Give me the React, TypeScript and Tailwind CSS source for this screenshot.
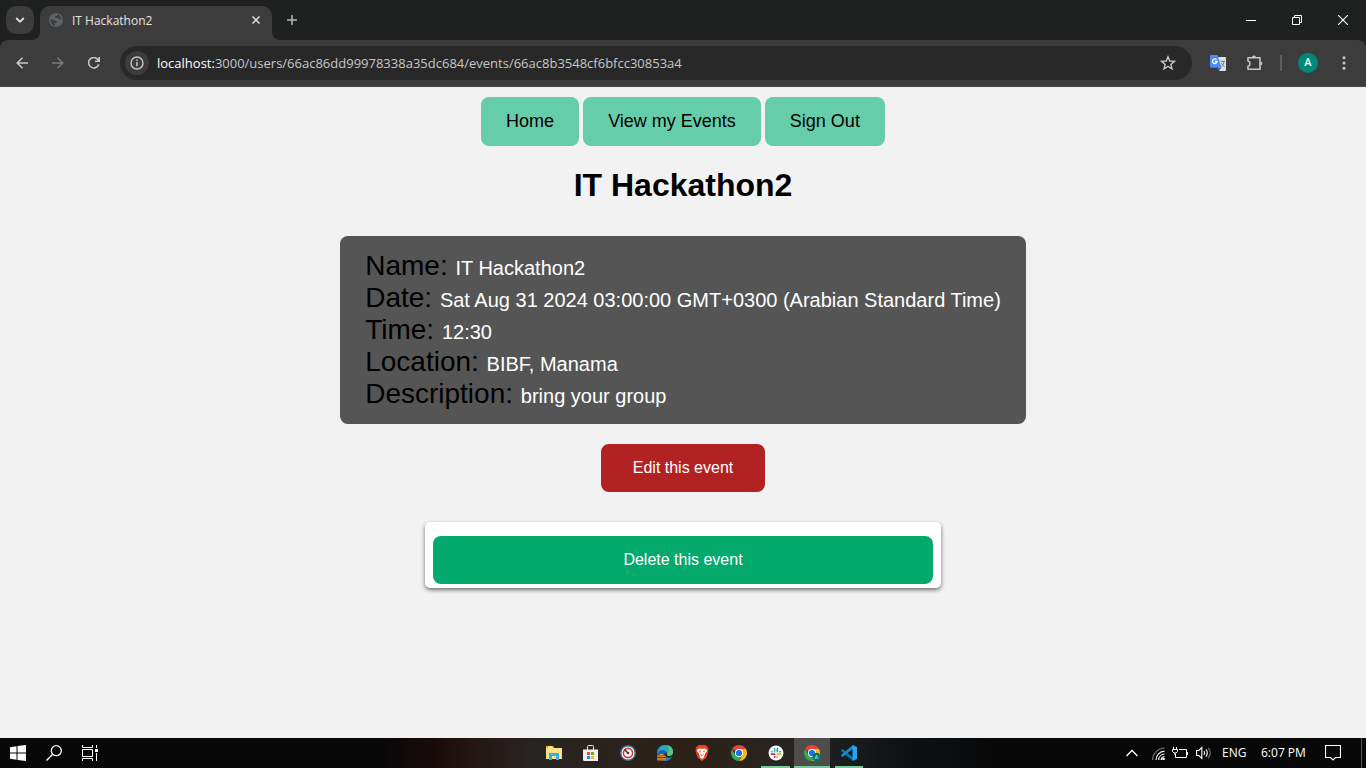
import React from "react";

function IconButton({ label, className, children }: { label: string; className: string; children: React.ReactNode }) {
  return (
    <button type="button" aria-label={label} className={`flex shrink-0 items-center justify-center ${className}`}>
      {children}
    </button>
  );
}

function GlobeIcon() {
  return (
    <svg width="14" height="14" viewBox="0 0 14 14" aria-hidden="true">
      <circle cx="7" cy="7" r="7" fill="#5f6368" />
      <path d="M1.400 6.400H4.600Q6.200 6.400 6.200 8H7.800V9.800H6.200V12.500C3.400 12.200 1.400 9.800 1.400 6.400Z" fill="#3c3c3c" />
      <path d="M8.300 1.500C8.300 3 7.600 3.400 6 3.400V5H8.600Q9.400 5 9.400 6.200H12.500C12.300 3.600 10.600 1.900 8.300 1.500Z" fill="#3c3c3c" />
    </svg>
  );
}

function ChromeIcon({ badge = false }: { badge?: boolean }) {
  return (
    <svg width="18" height="18" viewBox="0 0 18 18" aria-hidden="true">
      <g transform="translate(1 1)">
        <path d="M8 8L1.070 4A8 8 0 0 1 14.930 4Z" fill="#ea4335" />
        <path d="M8 4H14.930A8 8 0 0 1 8 16L11.500 10Z" fill="#fbbc05" />
        <path d="M4.540 10L1.070 4A8 8 0 0 0 8 16L11.400 10Z" fill="#34a853" />
        <circle cx="8" cy="8" r="4" fill="#fff" />
        <circle cx="8" cy="8" r="3.100" fill="#1a73e8" />
      </g>
      {badge && (
        <g>
          <circle cx="13.500" cy="13" r="4.200" fill="#00796b" />
          <path d="M12 15L13.500 11.200L15 15M12.600 13.800H14.400" stroke="#9fd8d0" strokeWidth=".8" fill="none" />
        </g>
      )}
    </svg>
  );
}

function BrowserChrome() {
  return (
    <header className="bg-[#1f2120] font-['Open_Sans','Noto_Sans',sans-serif]">
      <div className="flex h-10 items-stretch">
        <div className="flex w-10 items-center pl-1.5">
          <IconButton label="Search tabs" className="size-7 rounded-[10px] bg-[#3c3c3c] text-[#e3e3e3]">
            <svg width="10" height="10" viewBox="0 0 10 10" aria-hidden="true"><path d="M1.200 3L5 6.800L8.800 3" stroke="currentColor" strokeWidth="1.800" fill="none" /></svg>
          </IconButton>
        </div>
        <div className="relative mt-1.5 flex w-58 items-center rounded-t-[10px] bg-[#3c3c3c] px-2 pb-1.5">
          <svg className="absolute bottom-0 -left-2" width="8" height="8" viewBox="0 0 8 8" aria-hidden="true"><path d="M8 0A8 8 0 0 1 0 8H8Z" fill="#3c3c3c" /></svg>
          <svg className="absolute -right-2 bottom-0" width="8" height="8" viewBox="0 0 8 8" aria-hidden="true"><path d="M0 0A8 8 0 0 0 8 8H0Z" fill="#3c3c3c" /></svg>
          <span className="flex w-6 pl-px"><GlobeIcon /></span>
          <span className="flex-1 pt-px text-xs text-[#e3e3e3]">IT Hackathon2</span>
          <IconButton label="Close tab" className="size-4 text-[#e3e3e3]">
            <svg width="8" height="8" viewBox="0 0 8 8" aria-hidden="true"><path d="M.5 .5L7.500 7.500M7.500 .5L.5 7.500" stroke="currentColor" strokeWidth="1.500" /></svg>
          </IconButton>
        </div>
        <IconButton label="New tab" className="w-10 text-[#b8bab9]">
          <svg width="10" height="10" viewBox="0 0 10 10" aria-hidden="true"><path d="M0 5H10M5 0V10" stroke="currentColor" strokeWidth="1.500" /></svg>
        </IconButton>
        <div className="flex-1" />
        <IconButton label="Minimize" className="w-[46px] text-white">
          <svg width="10" height="10" viewBox="0 0 10 10" aria-hidden="true"><path d="M0 5.500H10" stroke="currentColor" /></svg>
        </IconButton>
        <IconButton label="Restore" className="w-[46px] text-white">
          <svg width="10" height="10" viewBox="0 0 10 10" aria-hidden="true"><path d="M.5 2.500H7.500V9.500H.5ZM2.500 2.500V.5H9.500V7.500H7.500" stroke="currentColor" fill="none" /></svg>
        </IconButton>
        <IconButton label="Close window" className="w-[46px] text-white">
          <svg width="10" height="10" viewBox="0 0 10 10" aria-hidden="true"><path d="M0 0L10 10M10 0L0 10" stroke="currentColor" strokeWidth="1.100" /></svg>
        </IconButton>
      </div>
      <div className="flex h-[47px] items-center rounded-t-lg border-b border-[#4a4748] bg-[#3c3c3c] pl-1">
        <IconButton label="Back" className="size-9 text-[#c7c7c7]">
          <svg width="12" height="12" viewBox="0 0 12 12" aria-hidden="true"><path d="M12 6H1.200M6.500 .7L1.200 6L6.500 11.300" stroke="currentColor" strokeWidth="1.600" fill="none" /></svg>
        </IconButton>
        <IconButton label="Forward" className="size-9 text-[#7c7c7c]">
          <svg width="12" height="12" viewBox="0 0 12 12" aria-hidden="true"><path d="M0 6H10.800M5.500 .7L10.800 6L5.500 11.300" stroke="currentColor" strokeWidth="1.600" fill="none" /></svg>
        </IconButton>
        <IconButton label="Reload" className="size-9 text-[#c7c7c7]">
          <svg width="12" height="12" viewBox="0 0 12 12" aria-hidden="true"><path d="M10.800 7.200A5.200 5.200 0 1 1 9.800 2.400L11 3.800M11.200 0V4.300H7" stroke="currentColor" strokeWidth="1.600" fill="none" /></svg>
        </IconButton>
        <div className="ml-2 flex h-[34px] flex-1 items-center rounded-full bg-[#282828] pl-[5px]">
          <IconButton label="View site information" className="size-6 rounded-full bg-[#3c3c3c] text-[#c7c7c7]">
            <svg width="14" height="14" viewBox="0 0 14 14" aria-hidden="true"><circle cx="7" cy="7" r="6" stroke="currentColor" strokeWidth="1.400" fill="none" /><path d="M7 6V10.200M7 3.600V5" stroke="currentColor" strokeWidth="1.500" /></svg>
          </IconButton>
          <div className="flex-1 pt-0.5 pl-2 text-[13px] whitespace-nowrap text-[#c7c7c7]">
            <span className="text-white">localhost:</span>3000/users/66ac86dd99978338a35dc684/events/66ac8b3548cf6bfcc30853a4
          </div>
          <IconButton label="Bookmark this tab" className="w-12 text-[#c7c7c7]">
            <svg width="16" height="16" viewBox="0 0 16 16" aria-hidden="true"><path d="M8 1.800L9.800 6L14.400 6.400L10.900 9.400L12 13.900L8 11.500L4 13.900L5.100 9.400L1.600 6.400L6.200 6Z" stroke="currentColor" strokeWidth="1.400" fill="none" /></svg>
          </IconButton>
        </div>
        <IconButton label="Google Translate" className="ml-2 size-9">
          <svg width="16" height="16" viewBox="0 0 16 16" aria-hidden="true">
            <path d="M7 2H15Q16 2 16 3V15Q16 16 15 16H9Z" fill="#e0dfdb" />
            <path d="M10.500 6.500H15M12.800 5.500V6.500M14.200 6.500Q13.500 10 11.400 11.500M11.400 8Q12.300 10.500 14.700 12" stroke="#75777c" strokeWidth=".9" fill="none" />
            <path d="M7.500 12.500H11.500L9 16Z" fill="#3367d6" />
            <path d="M1 0H7.500L11.500 12.700H1Q0 12.700 0 11.700V1Q0 0 1 0Z" fill="#4c8bf5" />
            <path d="M6.500 4.600A2.300 2.300 0 1 0 7.100 6.500H4.900" stroke="#fff" strokeWidth="1.300" fill="none" />
          </svg>
        </IconButton>
        <IconButton label="Extensions" className="size-9 pl-0.5 text-[#c7c7c7]">
          <svg width="18" height="18" viewBox="0 0 18 18" aria-hidden="true"><path d="M2 3.700H14V15.300H2V12.200Q4 11.700 4 9.500Q4 7.500 2 7Z" stroke="currentColor" strokeWidth="1.600" strokeLinejoin="round" fill="none" /><path d="M6 3.500A2 2 0 0 1 10 3.500ZM14.300 7.500A2 2 0 0 1 14.300 11.500Z" fill="currentColor" /></svg>
        </IconButton>
        <span className="ml-2 h-4 w-0.5 bg-[#5d5d5d]" />
        <IconButton label="Profile" className="ml-2 size-9">
          <span className="flex size-5 items-center justify-center rounded-full bg-[#00897b] font-[Roboto,sans-serif] text-[11px] font-medium text-white">A</span>
        </IconButton>
        <IconButton label="Menu" className="mr-1 size-9 text-[#c7c7c7]">
          <svg width="4" height="14" viewBox="0 0 4 14" aria-hidden="true" fill="currentColor"><circle cx="2" cy="1.700" r="1.500" /><circle cx="2" cy="7" r="1.500" /><circle cx="2" cy="12.300" r="1.500" /></svg>
        </IconButton>
      </div>
    </header>
  );
}

const details = [
  ["Name", "IT Hackathon2"],
  ["Date", "Sat Aug 31 2024 03:00:00 GMT+0300 (Arabian Standard Time)"],
  ["Time", "12:30"],
  ["Location", "BIBF, Manama"],
  ["Description", "bring your group"],
];

function EventPage() {
  return (
    <main className="flex flex-1 flex-col items-center bg-[#f2f2f2] pt-2.5 font-['Liberation_Sans',Arial,sans-serif] text-black">
      <nav className="flex gap-1 text-lg leading-[21px]">
        {["Home", "View my Events", "Sign Out"].map((item) => (
          <a key={item} href="#" className="rounded-lg bg-[#66cdaa] px-[25px] py-3.5">{item}</a>
        ))}
      </nav>
      <h1 className="mt-5 text-[32px] leading-[38px] font-bold">IT Hackathon2</h1>
      <dl className="mt-8 rounded-lg bg-[#555555] px-[25px] py-3.5">
        {details.map(([term, value]) => (
          <div key={term} className="h-8 whitespace-nowrap">
            <dt className="inline text-[28px] leading-8">{term}:&nbsp;</dt>
            <dd className="inline text-xl leading-8 text-white">{value}</dd>
          </div>
        ))}
      </dl>
      <a href="#" className="mt-5 rounded-lg bg-[#b22222] px-8 py-3 text-base text-white">Edit this event</a>
      <form className="mt-[30px] flex w-full max-w-[516px] flex-col rounded-[5px] bg-white px-2 pt-3.5 pb-1 shadow-[0_2px_4px_rgba(0,0,0,0.55)]" onSubmit={(event) => event.preventDefault()}>
        <button type="submit" className="rounded-lg bg-[#04aa6d] py-3 text-base text-white">Delete this event</button>
      </form>
    </main>
  );
}

function Taskbar() {
  return (
    <footer className="flex h-[30px] bg-[linear-gradient(90deg,#080808_0%,#080808_28%,#190c0b_32%,#241716_35%,#282522_39%,#2d2117_50%,#272522_58%,#0e1215_66%,#080808_73%,#080808_100%)] font-['Open_Sans','Noto_Sans',sans-serif] text-white">
      <div className="flex flex-1">
        <IconButton label="Start" className="w-9">
          <svg width="16" height="16" viewBox="0 0 16 16" aria-hidden="true" fill="#fff"><path d="M0 2.200L6.500 1.300V7.500H0ZM7.500 1.100L16 0V7.500H7.500ZM0 8.500H6.500V14.700L0 13.800ZM7.500 8.500H16V16L7.500 14.900Z" /></svg>
        </IconButton>
        <IconButton label="Search" className="w-9">
          <svg width="16" height="16" viewBox="0 0 16 16" aria-hidden="true"><circle cx="10.300" cy="5.700" r="5" stroke="#fff" strokeWidth="1.300" fill="none" /><path d="M6.700 9.300L.5 15.500" stroke="#fff" strokeWidth="1.400" /></svg>
        </IconButton>
        <IconButton label="Task view" className="w-9">
          <svg width="16" height="16" viewBox="0 0 16 16" aria-hidden="true" stroke="#fff" fill="none"><path d="M.5 0V2.500H10.500V0M.5 4.500H10.500V11.500H.5ZM.5 16V13.500H10.500V16M14.500 0V3M14.500 8V16" /><path d="M13 4H16V7H13Z" fill="#fff" stroke="none" /></svg>
        </IconButton>
      </div>
      <div className="flex pl-9">
        <IconButton label="File Explorer" className="w-[37px]">
          <svg width="16" height="16" viewBox="0 0 16 16" aria-hidden="true"><path d="M0 1H7L8 3H16V14H0Z" fill="#ffe08a" /><path d="M0 1H7L8 3H0Z" fill="#f5bd2e" /><path d="M1 2H2" stroke="#9b741b" /><path d="M2 2H6" stroke="#fff" /><path d="M3 15V8H13V15H10V11H6V15Z" fill="#38aee3" /></svg>
        </IconButton>
        <IconButton label="Microsoft Store" className="w-[37px]">
          <svg width="16" height="16" viewBox="0 0 16 16" aria-hidden="true"><path d="M4.500 5V1.500Q4.500 .5 5.500 .5H9.500Q10.500 .5 10.500 1.500V5" stroke="#f0f0f0" fill="none" /><path d="M0 4.500H15V16H1.500Q0 16 0 14.500Z" fill="#f0f0f0" /><path d="M4 7H7V10H4Z" fill="#e34a2e" /><path d="M8 7H11V10H8Z" fill="#72a52c" /><path d="M4 11H7V14H4Z" fill="#168edb" /><path d="M8 11H11V14H8Z" fill="#f2b412" /></svg>
        </IconButton>
        <IconButton label="Clock utility" className="w-[37px]">
          <svg width="16" height="16" viewBox="0 0 16 16" aria-hidden="true"><circle cx="8" cy="8" r="7.300" fill="#f5f5f5" stroke="#3d6488" strokeWidth="1.400" /><circle cx="8" cy="8" r="4.600" fill="#fff" stroke="#d9362f" strokeWidth="1.600" /><path d="M8 8L4.500 4.500" stroke="#303030" strokeWidth="1.500" /><circle cx="8" cy="8" r="1.300" fill="#383838" /></svg>
        </IconButton>
        <IconButton label="Microsoft Edge" className="w-[37px]">
          <svg width="16" height="16" viewBox="0 0 16 16" aria-hidden="true"><path d="M0 8A8 8 0 0 1 8 0Q16 0 16 7Q16 11 11.500 11Q9.500 11 10 9Q10 6 6 6Q2 6 1 10Z" fill="#2ba9c4" /><path d="M10 .3Q16 1.500 16 7Q16 11 11.500 11Q9.500 11 10 9Q14 6 10 .3Z" fill="#5cc774" /><path d="M0 10Q1 4.500 6 5Q9.500 5.500 10 8.500Q7 7.500 7.500 11L9 16H8Q0 16 0 10Z" fill="#1266b4" /><path d="M8 11Q10 14 15 12Q13 16 8 16Z" fill="#1581cc" /><path d="M0 10.500H9V15.500H0Z" fill="#c97b1c" /><path d="M0 12.500H9" stroke="#76420e" /><path d="M3 10.500V9.500H6V10.500" stroke="#e0a044" fill="none" /></svg>
        </IconButton>
        <IconButton label="Brave" className="w-[37px]">
          <svg width="14" height="16" viewBox="0 0 14 16" aria-hidden="true"><path d="M3.500 0H10.500L12 1.500L13.500 3L13 5L13.500 6L11.500 12.500L7 16L2.500 12.500L.5 6L1 5L.5 3L2 1.500Z" fill="#f4401e" /><path d="M2.800 4L5 3.500L7 4L9 3.500L11.200 4L12 6L10 8.500V10L8.500 11L9.500 12L7 14L4.500 12L5.500 11L4 10V8.500L2 6Z" fill="#fff" /><path d="M4 6L6 7M10 6L8 7M5.500 9.500L7 10.500L8.500 9.500" stroke="#f4401e" strokeWidth=".9" fill="none" /></svg>
        </IconButton>
        <IconButton label="Chrome" className="w-[37px]"><ChromeIcon /></IconButton>
        <IconButton label="Slack" className="relative w-[37px]">
          <svg width="16" height="16" viewBox="0 0 16 16" aria-hidden="true"><circle cx="8" cy="8" r="7.500" fill="#fff" /><g strokeWidth="1.700" strokeLinecap="round"><path d="M6.700 3.700V6.700M3.600 6.700H4.500" stroke="#36c5f0" /><path d="M9.300 3.600V6.700M11.800 6.700H12.500" stroke="#2eb67d" /><path d="M3.600 9.200H6.700M6.700 12.300V11.700" stroke="#e01e5a" /><path d="M9.300 9.200H12.400M9.300 11.700V12.400" stroke="#ecb22e" /></g></svg>
          <span className="absolute inset-x-1 bottom-0 h-0.5 bg-[#78ca9c]" />
        </IconButton>
        <IconButton label="Chrome profile" className="relative w-9 bg-[#4e4d4b]">
          <ChromeIcon badge />
          <span className="absolute inset-x-0 bottom-0 h-0.5 bg-[#78ca9c]" />
        </IconButton>
        <IconButton label="Visual Studio Code" className="relative ml-px w-9">
          <svg width="16" height="16" viewBox="0 0 16 16" aria-hidden="true"><path d="M0 5L1.600 4L12 12.200V16L0 6Z" fill="#0179ba" /><path d="M0 11L1.600 12L12 3.800V0L0 10Z" fill="#168bd1" /><path d="M11.500 0L16 2V14L11.500 16Z" fill="#26a4ef" /></svg>
          <span className="absolute inset-x-1 bottom-0 h-0.5 bg-[#78ca9c]" />
        </IconButton>
      </div>
      <div className="flex flex-1 items-center justify-end">
        <IconButton label="Show hidden icons" className="h-full w-6"><svg width="12" height="8" viewBox="0 0 12 8" aria-hidden="true"><path d="M.5 7L6 1.500L11.500 7" stroke="#fff" strokeWidth="1.300" fill="none" /></svg></IconButton>
        <IconButton label="Network" className="h-full w-6 pl-1">
          <svg width="13" height="13" viewBox="0 0 13 13" aria-hidden="true" fill="none"><path d="M.5 13A12.500 12.500 0 0 1 12.500 1" stroke="#777" strokeWidth="1.200" /><path d="M4 13A9 9 0 0 1 12.500 4.200M6.600 13A6.400 6.400 0 0 1 12.500 7M9 13A4 4 0 0 1 12.500 9.500" stroke="#eee" strokeWidth="1.200" /><circle cx="11.500" cy="12" r="1.300" fill="#fff" /></svg>
        </IconButton>
        <IconButton label="Battery charging" className="h-full w-6">
          <svg width="16" height="12" viewBox="0 0 16 12" aria-hidden="true" fill="none" stroke="#fff"><path d="M7 2.500H14.500V10.500H3.500V7M15.500 5V8M1.500 0V2M4.500 0V2M.5 2.500H5.500V4.500L4 6H2L.5 4.500ZM3 6V8" /></svg>
        </IconButton>
        <IconButton label="Volume" className="h-full w-6">
          <svg width="16" height="14" viewBox="0 0 16 14" aria-hidden="true" fill="none" stroke="#fff" strokeWidth="1.100"><path d="M.6 4.500H2.800L5.800 1.500V12.500L2.800 9.500H.6ZM8 5Q9.200 7 8 9M10 3.300Q12.600 7 10 10.700" /><path d="M12.200 1.800Q16.500 7 12.200 12.200" stroke="#777" /></svg>
        </IconButton>
        <span className="ml-1.5 w-[39px] text-xs">ENG</span>
        <time className="w-14 text-xs whitespace-nowrap">6:07 PM</time>
        <IconButton label="Notifications" className="mr-3 h-full w-8">
          <svg width="16" height="16" viewBox="0 0 16 16" aria-hidden="true"><path d="M.5 .5H15.500V12.500H10.500L8 15L5.500 12.500H.5Z" stroke="#fff" strokeWidth="1.200" fill="none" /></svg>
        </IconButton>
        <span className="mr-1 h-full w-px bg-[#555]" />
      </div>
    </footer>
  );
}

export default function App() {
  return (
    <div className="flex min-h-screen flex-col">
      <BrowserChrome />
      <EventPage />
      <Taskbar />
    </div>
  );
}
